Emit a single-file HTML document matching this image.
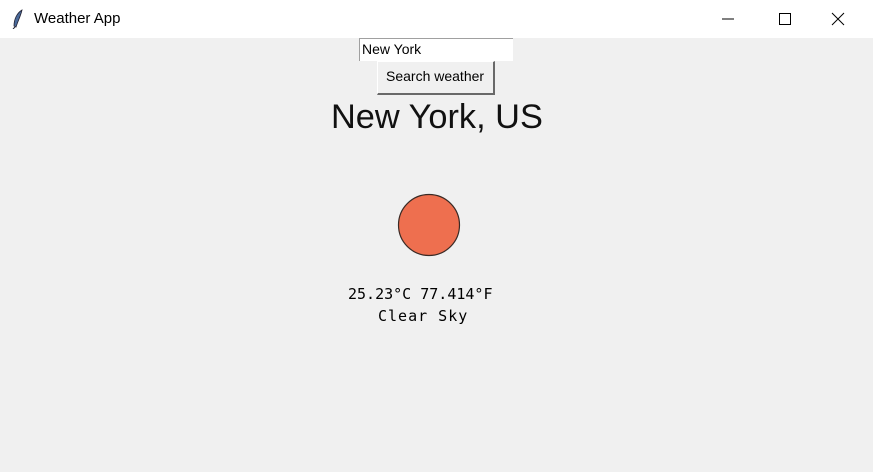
<!DOCTYPE html>
<html><head><style>
body{margin:0;width:873px;height:472px;background:#f0f0f0;position:relative;overflow:hidden;font-family:"Liberation Sans",sans-serif}
.tb{position:absolute;left:0;top:0;width:873px;height:38px;background:#fff}
.t{position:absolute;white-space:nowrap}
.mono{font-family:"DejaVu Sans Mono",monospace;font-size:15px;color:#000}
</style></head><body>
<div class="tb">
<svg style="position:absolute;left:11px;top:9px" width="14" height="20"><path d="M11 1 C6 4 3 10 3 17 L5 18 C7 12 10 6 11 1Z" fill="#4a6a9a" stroke="#223" stroke-width="0.8"/><path d="M4 18 L2 20" stroke="#223"/></svg>
<div class="t" style="left:34px;top:10px;font-size:15px;color:#000">Weather App</div>
<svg style="position:absolute;left:722px;top:12px" width="130" height="14"><path d="M0 7H12" stroke="#000" stroke-width="1"/><rect x="57.5" y="1.5" width="11" height="11" fill="none" stroke="#000"/><path d="M110 1L122 13M122 1L110 13" stroke="#000"/></svg>
</div>
<div style="position:absolute;left:359px;top:38px;width:153px;height:22px;background:#fff;border-top:1px solid #a0a0a0;border-left:1px solid #a0a0a0"></div>
<div class="t" style="left:362px;top:41px;font-size:14px;color:#000">New York</div>
<div style="position:absolute;left:377px;top:61px;width:115px;height:31px;background:#f0f0f0;border:1px solid #fff;border-right:2px solid #696969;border-bottom:2px solid #696969;box-sizing:content-box"></div>
<div class="t" style="left:386px;top:68px;font-size:14px;color:#000">Search weather</div>
<div class="t" style="left:331px;top:98px;font-size:34px;color:#111;transform:scaleX(1.01);transform-origin:left">New York, US</div>
<svg style="position:absolute;left:396px;top:193px" width="66" height="66"><circle cx="33" cy="32" r="30.5" fill="#ee6f4f" stroke="#3a2a25" stroke-width="1.2"/></svg>
<div class="t mono" style="left:348px;top:285px">25.23°C 77.414°F</div>
<div class="t mono" style="left:378px;top:307px;letter-spacing:1px">Clear Sky</div>
</body></html>
